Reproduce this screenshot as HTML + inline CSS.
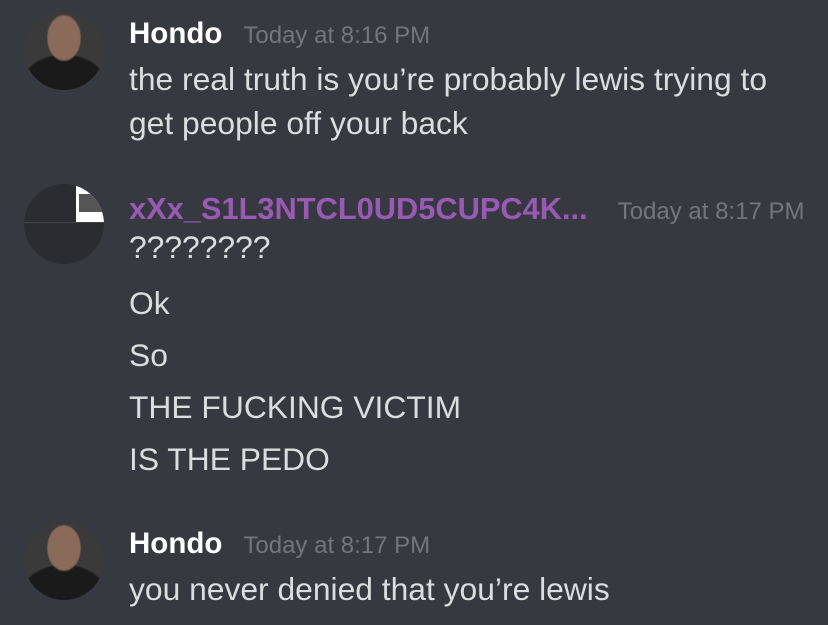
<!DOCTYPE html>
<html><head><style>
body{margin:0;width:828px;height:625px;background:#36393f;overflow:hidden;font-family:"Liberation Sans",sans-serif;position:relative}
.t{position:absolute;left:129px;color:#dcddde;font-size:31.8px;white-space:nowrap;line-height:34px}
.n{position:absolute;left:129px;font-weight:bold;font-size:29.5px;color:#fff;white-space:nowrap;line-height:34px}
.ts{font-weight:normal;color:#72767d;font-size:24px;margin-left:21px}
.av{position:absolute;left:24px;width:80px;height:80px;border-radius:50%;overflow:hidden;background:#222}
</style></head><body>
<div class="av" style="top:10px;background:radial-gradient(ellipse 22% 30% at 50% 35%,#8a6a58 0 90%,transparent 100%),radial-gradient(ellipse 55% 40% at 50% 95%,#1a1a1a 0 95%,transparent 100%),#3a3a3a"></div>
<div class="n" style="top:17px">Hondo<span class="ts">Today at 8:16 PM</span></div>
<div class="t" style="top:62px">the real truth is you’re probably lewis trying to</div>
<div class="t" style="top:106px">get people off your back</div>

<div class="av" style="top:184px;background:#2b2c30"><div style="position:absolute;left:52px;top:0;width:28px;height:38px;background:#fff"></div><div style="position:absolute;left:55px;top:10px;width:24px;height:18px;background:#555"></div><div style="position:absolute;left:0;top:38px;width:80px;height:1px;background:#444"></div></div>
<div class="n" style="top:192px;color:#9b59b6;font-size:30.8px">xXx_S1L3NTCL0UD5CUPC4K...<span class="ts" style="margin-left:30px">Today at 8:17 PM</span></div>
<div class="t" style="top:230px">????????</div>
<div class="t" style="top:286px">Ok</div>
<div class="t" style="top:338px">So</div>
<div class="t" style="top:390px">THE FUCKING VICTIM</div>
<div class="t" style="top:442px">IS THE PEDO</div>

<div class="av" style="top:520px;background:radial-gradient(ellipse 22% 30% at 50% 35%,#8a6a58 0 90%,transparent 100%),radial-gradient(ellipse 55% 40% at 50% 95%,#1a1a1a 0 95%,transparent 100%),#3a3a3a"></div>
<div class="n" style="top:527px">Hondo<span class="ts">Today at 8:17 PM</span></div>
<div class="t" style="top:572px">you never denied that you’re lewis</div>
</body></html>
